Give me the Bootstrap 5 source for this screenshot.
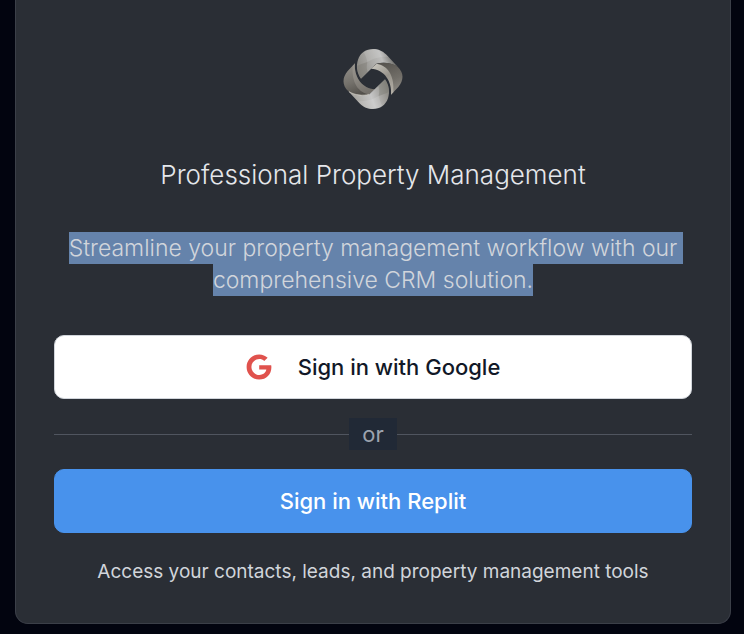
<!DOCTYPE html>
<html lang="en">
<head>
<meta charset="utf-8">
<meta name="viewport" content="width=device-width, initial-scale=1">
<title>Professional Property Management</title>
<link href="https://cdn.jsdelivr.net/npm/bootstrap@5.3.0/dist/css/bootstrap.min.css" rel="stylesheet">
<style>
  body { background: #02040f; font-family: Inter, "Liberation Sans", sans-serif; padding: 0 13px 10px 15px; }
  .login-card { background: #2a2e35; border: 1px solid #3b3f48; border-top: 0; border-radius: 0 0 13px 13px; padding: 48px 38px 37px; color: #e5e7eb; }
  .logo { width: 62px; height: 62px; }
  .title { font-size: 26px; line-height: 36px; font-weight: 300; margin: 47px 0 39px; }
  .intro { font-size: 23px; line-height: 32px; font-weight: 300; color: #d1d5db; margin: 0 0 39px; }
  .intro span { background: #6583ab; padding: 2px 0; }
  .intro .wraps { padding-right: 6px; margin-right: -6px; }
  .btn-sign { height: 64px; border-radius: 10px; font-size: 22px; line-height: 32px; font-weight: 500; }
  .btn-google, .btn-google:hover { background: #fff; border-color: #d1d5db; color: #111827; gap: 26px; }
  .btn-replit, .btn-replit:hover { background: #4892ec; border-color: #4892ec; color: #fff; }
  .divider { margin: 19px 0; font-size: 22px; line-height: 32px; color: #9ca3af; }
  .divider::before, .divider::after { content: ""; flex: 1; height: 1px; background: #50555f; }
  .divider span { background: #212936; padding: 0 13px; }
  .note { font-size: 19px; line-height: 28px; color: #d1d5db; margin: 25px 0 0; }
</style>
<script src="https://cdn.jsdelivr.net/npm/bootstrap@5.3.0/dist/js/bootstrap.bundle.min.js"></script>
</head>
<body>
<main class="login-card text-center">
  <svg class="logo d-block mx-auto" viewBox="27 24 186 186" role="img" aria-label="Company logo">
    <defs>
      <linearGradient id="topBand" x1="75" y1="90" x2="180" y2="50" gradientUnits="userSpaceOnUse">
        <stop offset="0" stop-color="#8b8984"/><stop offset=".4" stop-color="#aaa9a6"/><stop offset=".7" stop-color="#bdbdbc"/><stop offset="1" stop-color="#6f6e6a"/>
      </linearGradient>
      <linearGradient id="rightBand" x1="150" y1="70" x2="190" y2="155" gradientUnits="userSpaceOnUse">
        <stop offset="0" stop-color="#57544f"/><stop offset=".6" stop-color="#716e68"/><stop offset="1" stop-color="#8c8983"/>
      </linearGradient>
      <linearGradient id="rightStrip" x1="120" y1="80" x2="182" y2="155" gradientUnits="userSpaceOnUse">
        <stop offset="0" stop-color="#c4c1b9"/><stop offset=".5" stop-color="#98948c"/><stop offset="1" stop-color="#b3afa6"/>
      </linearGradient>
      <linearGradient id="bottomBand" x1="70" y1="180" x2="165" y2="145" gradientUnits="userSpaceOnUse">
        <stop offset="0" stop-color="#aaa8a3"/><stop offset=".45" stop-color="#c6c6c6"/><stop offset="1" stop-color="#8a8882"/>
      </linearGradient>
      <linearGradient id="leftBand" x1="50" y1="80" x2="85" y2="165" gradientUnits="userSpaceOnUse">
        <stop offset="0" stop-color="#8d8a84"/><stop offset=".5" stop-color="#74716b"/><stop offset="1" stop-color="#504d48"/>
      </linearGradient>
    </defs>
    <path fill="url(#topBand)" d="M84 116C71 98 69 77 75 59C82 38 99 27 120 27C137 27 148 33 159 43L194 80C174 68 150 66 130 71Z"/>
    <path fill="#77756f" opacity=".4" d="M84 116C76 104 73 91 73 78C83 73 91 70 103 66C100 79 101 88 104 96Z"/>
    <path fill="#fff" opacity=".12" d="M92 37C107 26 138 25 155 40L167 51C145 48 119 56 103 66C100 54 97 45 92 37Z"/>
    <path fill="url(#rightBand)" d="M122 79L131 71C151 65 178 68 194 80C214 99 212 122 196 141L174 164C181 122 158 88 122 79Z"/>
    <path fill="url(#rightStrip)" d="M114 86L131 71C162 76 185 103 181 157L174 164C178 126 154 87 114 86Z"/>
    <path fill="url(#leftBand)" d="M66 70C62 108 86 147 126 148L109 163C89 169 62 166 46 154C26 135 28 112 44 93Z"/>
    <path fill="#aaa69d" opacity=".4" d="M66 70L59 77C55 131 78 158 109 163L126 148C86 147 62 108 66 70Z"/>
    <path fill="url(#bottomBand)" d="M156 118C169 136 171 157 165 175C158 196 141 207 120 207C103 207 92 201 81 191L46 154C66 166 90 168 109 163Z"/>
    <path fill="#77756f" opacity=".38" d="M156 118C164 130 167 143 167 156C158 161 149 164 137 168C140 155 139 146 136 138Z"/>
    <path fill="#fff" opacity=".12" d="M148 197C133 208 102 209 85 194L73 183C95 186 121 178 137 168C140 180 143 189 148 197Z"/>
    <path fill="none" stroke="#d4d0c5" stroke-width="2" d="M48 155C66 166 90 168 108 163"/>
  </svg>
  <h1 class="title">Professional Property Management</h1>
  <p class="intro"><span class="wraps">Streamline your property management workflow with our</span> <span>comprehensive CRM solution.</span></p>
  <button type="button" class="btn btn-sign btn-google w-100 d-flex align-items-center justify-content-center">
    <svg width="26" height="26" viewBox="0 0 488 512" aria-hidden="true"><path fill="#e0524d" d="M488 261.800C488 403.300 391.100 504 248 504 110.800 504 0 393.200 0 256S110.800 8 248 8c66.800 0 123 24.500 166.300 64.900l-67.500 64.900C258.500 52.600 94.300 116.600 94.300 256c0 86.500 69.100 156.600 153.700 156.600 98.200 0 135-70.400 140.800-106.900H248v-85.300h236.100c2.300 12.700 3.900 24.900 3.900 41.400z"/></svg>
    <span>Sign in with Google</span>
  </button>
  <div class="divider d-flex align-items-center"><span>or</span></div>
  <button type="button" class="btn btn-sign btn-replit w-100">Sign in with Replit</button>
  <p class="note">Access your contacts, leads, and property management tools</p>
</main>
</body>
</html>
